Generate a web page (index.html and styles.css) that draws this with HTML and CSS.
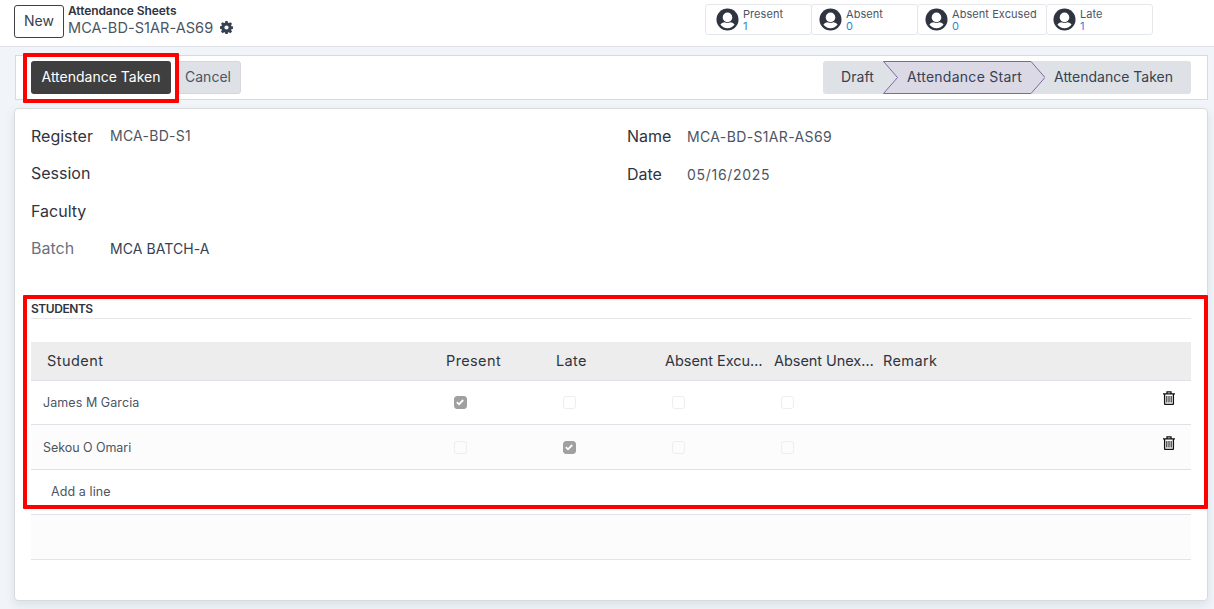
FILE: index.html
```html
<!DOCTYPE html>
<html lang="en">
<head>
<meta charset="utf-8">
<title>Attendance Sheets</title>
<link rel="stylesheet" href="styles.css">
</head>
<body>
<svg class="defs" width="0" height="0" aria-hidden="true">
  <defs>
    <symbol id="person" viewBox="0 0 24 24">
      <circle cx="12" cy="12" r="11.500" fill="#2f3440"/>
      <circle cx="12" cy="9.800" r="5" fill="#fff"/>
      <path d="M4.600 17.200C6 15.500 7.800 15 9 14.900c.9.500 1.900.8 3 .8s2.100-.3 3-.8c1.200.1 3 .6 4.400 2.300A9 9 0 0 1 12 21a9 9 0 0 1-7.400-3.800z" fill="#fff"/>
    </symbol>
    <symbol id="trash" viewBox="0 0 12 14">
      <path d="M4 2.200V.8h4v1.400M0 2.800h12M1.600 3v9.600q0 .9.900.9h7q.9 0 .9-.9V3" fill="none" stroke="#111" stroke-width="1.300"/>
      <path d="M3.800 5v6.500M6 5v6.500M8.200 5v6.500" fill="none" stroke="#333" stroke-width="1.200"/>
    </symbol>
    <symbol id="tick" viewBox="0 0 12 12">
      <path d="M2.800 6.200l2.200 2.100 4.200-4.300" fill="none" stroke="#fff" stroke-width="1.800"/>
    </symbol>
  </defs>
</svg>
<header class="topbar">
  <button class="btn-new">New</button>
  <div class="crumbs">
    <div class="crumb-parent">Attendance Sheets</div>
    <div class="crumb-current">MCA-BD-S1AR-AS69
      <svg class="gear" viewBox="0 0 16 16" width="13" height="13"><path fill="#374151" fill-rule="evenodd" d="M6.600 0h2.800l.4 2.100 1.200.5L12.800 1.400l2 2-1.200 1.800.5 1.200 1.900.4v2.800l-1.900.4-.5 1.200 1.200 1.800-2 2-1.800-1.200-1.200.5-.4 1.900H6.600l-.4-1.900-1.200-.5-1.800 1.200-2-2 1.200-1.800-.5-1.200L0 9.400V6.600l1.900-.4.5-1.200L1.200 3.400l2-2L5 2.600l1.200-.5zM8 5.400a2.600 2.600 0 1 0 0 5.200 2.600 2.600 0 0 0 0-5.200z"/></svg>
    </div>
  </div>
  <div class="stats">
    <div class="stat stat-a"><svg class="person" width="23" height="23"><use href="#person"/></svg><div class="stat-text"><span class="stat-label">Present</span><span class="stat-val">1</span></div></div>
    <div class="stat stat-b"><svg class="person" width="23" height="23"><use href="#person"/></svg><div class="stat-text"><span class="stat-label">Absent</span><span class="stat-val">0</span></div></div>
    <div class="stat stat-c"><svg class="person" width="23" height="23"><use href="#person"/></svg><div class="stat-text"><span class="stat-label">Absent Excused</span><span class="stat-val">0</span></div></div>
    <div class="stat stat-d"><svg class="person" width="23" height="23"><use href="#person"/></svg><div class="stat-text"><span class="stat-label">Late</span><span class="stat-val">1</span></div></div>
  </div>
</header>

<section class="actionbar">
  <div class="actions">
    <button class="btn-dark">Attendance Taken</button>
    <button class="btn-light">Cancel</button>
  </div>
  <div class="statusbar">
    <span class="step step-draft">Draft</span>
    <span class="step step-current">Attendance Start
      <svg class="arrow" viewBox="0 0 162 33" width="162" height="33"><path d="M0.500 0.500H148L162 16.500L148 32.500H0.500L14.500 16.500Z" fill="#dcd9e6" stroke="#7a6a9e"/></svg>
    </span>
    <span class="step step-last">Attendance Taken</span>
  </div>
</section>

<main class="sheet">
  <div class="fields">
    <div class="field-col">
      <div class="field"><span class="label">Register</span><span class="value">MCA-BD-S1</span></div>
      <div class="field"><span class="label">Session</span></div>
      <div class="field"><span class="label">Faculty</span></div>
      <div class="field"><span class="label label-muted">Batch</span><span class="value value-dark">MCA BATCH-A</span></div>
    </div>
    <div class="field-col col-right">
      <div class="field"><span class="label label-short">Name</span><span class="value value-name">MCA-BD-S1AR-AS69</span></div>
      <div class="field"><span class="label label-short">Date</span><span class="value value-date">05/16/2025</span></div>
    </div>
  </div>

  <h2 class="section-title">STUDENTS</h2>

  <table class="grid">
    <thead>
      <tr>
        <th class="c-student">Student</th>
        <th class="c-check">Present</th>
        <th class="c-check c-shift">Late</th>
        <th class="c-check c-shift c-abs">Absent Excu…</th>
        <th class="c-check c-shift c-abs">Absent Unex…</th>
        <th class="c-remark c-shift">Remark</th>
        <th class="c-del"></th>
      </tr>
    </thead>
    <tbody>
      <tr class="row-first">
        <td class="name">James M Garcia</td>
        <td><span class="box on"><svg width="12" height="12"><use href="#tick"/></svg></span></td>
        <td><span class="box"></span></td>
        <td><span class="box"></span></td>
        <td><span class="box"></span></td>
        <td></td>
        <td class="del"><svg width="12" height="14"><use href="#trash"/></svg></td>
      </tr>
      <tr class="alt">
        <td class="name">Sekou O Omari</td>
        <td><span class="box"></span></td>
        <td><span class="box on"><svg width="12" height="12"><use href="#tick"/></svg></span></td>
        <td><span class="box"></span></td>
        <td><span class="box"></span></td>
        <td></td>
        <td class="del"><svg width="12" height="14"><use href="#trash"/></svg></td>
      </tr>
      <tr class="add-row"><td colspan="7"><span class="add-line">Add a line</span></td></tr>
    </tbody>
  </table>
  <div class="footer-band"></div>
</main>

<div class="mark mark-btn"></div>
<div class="mark mark-table"></div>
</body>
</html>
```

FILE: styles.css
```css
* { box-sizing: border-box; }
html, body { margin: 0; padding: 0; }
body {
  width: 1214px; height: 609px; overflow: hidden; position: relative;
  background: #f1f5fa; color: #374151;
  font-family: "Inter", "Noto Sans", "Liberation Sans", sans-serif;
  font-size: 14px;
}
button { font-family: inherit; cursor: pointer; }
.defs { position: absolute; }

.topbar {
  height: 47px; background: #fff; border-bottom: 1px solid #dee2e6;
  display: flex; align-items: flex-start; padding: 5px 0 0 14px;
}
.btn-new {
  width: 50px; height: 33px; padding: 0 0 2px; background: #fff; color: #374151;
  border: 1px solid #3f4147; border-radius: 3px; font-size: 14px;
}
.crumbs { margin-left: 4px; margin-top: -1px; width: 170px; }
.crumb-parent { font-size: 12px; font-weight: 600; line-height: 13px; color: #2f3440; letter-spacing: -0.08px; white-space: nowrap; }
.crumb-current { font-size: 14.500px; line-height: 21px; color: #4b5563; display: flex; align-items: center; gap: 7px; letter-spacing: .06px; white-space: nowrap; }
.gear { flex: none; }

.stats { display: flex; margin-left: 467px; margin-top: -1px; }
.stat {
  height: 31px; background: #fff; border: 1px solid #e5e7eb; border-radius: 3px;
  display: flex; align-items: center; padding-left: 10px; gap: 4px; margin-right: -1px; flex: none;
}
.stat-a, .stat-b, .stat-d { width: 107px; }
.stat-b { padding-left: 7px; }
.stat-c { width: 130px; padding-left: 7px; }
.stat-d { padding-left: 6px; }
.stat-text { display: flex; flex-direction: column; font-size: 11px; line-height: 12px; letter-spacing: .06px; }
.stat-label { color: #4b5563; }
.stat-val { color: #2f86d6; }

.actionbar {
  height: 45px; margin: 8px 6px 0 15px; background: #fff; border: 1px solid #d8dadd;
  display: flex; align-items: center; justify-content: space-between;
  padding: 0 16px 0 15px;
}
.actions { display: flex; gap: 6px; }
.btn-dark, .btn-light { height: 33px; border-radius: 3px; font-size: 14px; padding: 0 0 2px; border: 0; }
.btn-dark { width: 140px; background: #3f3f3f; color: #fff; }
.btn-light { width: 64px; background: #dee2e6; border: 1px solid #d4d8dc; color: #4b5563; padding-right: 2px; }

.statusbar {
  display: flex; height: 33px; width: 368px; background: #dee2e6; border-radius: 3px;
  font-size: 14px; color: #374151; line-height: 31px; letter-spacing: .05px;
}
.step { white-space: nowrap; }
.step-draft { width: 60px; padding-left: 18px; }
.step-current { width: 162px; padding-left: 24px; position: relative; height: 33px; isolation: isolate; letter-spacing: .27px; }
.step-current .arrow { position: absolute; left: 0; top: 0; z-index: -1; }
.step-last { padding-left: 9px; letter-spacing: 0; }

.sheet {
  height: 493px; margin: 8px 6px 0 14px; background: #fff; border: 1px solid #d8dadd;
  border-radius: 4px; box-shadow: 0 4px 10px rgba(60, 70, 90, .12);
  padding: 8px 16px 0 16px;
}
.fields { display: grid; grid-template-columns: 596px 1fr; height: 160px; }
.field { display: flex; align-items: center; height: 37.500px; }
.col-right .field { height: 38px; }
.label { width: 79px; font-size: 16px; color: #2f3440; }
.label-short { width: 60px; }
.label-muted { color: #6b7280; }
.value { font-size: 14px; color: #4b5563; letter-spacing: .25px; }
.value-dark { color: #374151; letter-spacing: .08px; }
.value-name { letter-spacing: .36px; }
.value-date { letter-spacing: .7px; }

.section-title {
  margin: 23px 0 0; height: 19px; font-size: 12px; line-height: 17px; font-weight: 600;
  color: #2f3440; border-bottom: 1px solid #e5e7eb; letter-spacing: -0.45px;
}
.grid { width: 100%; margin-top: 23px; border-collapse: collapse; table-layout: fixed; }
.grid th {
  height: 38px; background: #ededed; border-bottom: 1px solid #dee2e6; font-size: 14.500px;
  font-weight: 400; color: #2f3440; text-align: left; white-space: nowrap; padding: 0; letter-spacing: .38px;
}
.c-student { width: 415px; padding-left: 16px !important; letter-spacing: .45px !important; }
.c-check { width: 109px; }
.grid .c-shift { padding-left: 1px; }
.grid .c-abs { letter-spacing: -0.05px; }
.c-del { width: 44px; }
.grid td { padding: 0 0 0 8px; border-bottom: 1px solid #dee2e6; vertical-align: middle; }
.row-first td { height: 44px; }
.grid .alt td { height: 45px; background: #fcfcfc; padding-top: 1px; }
.grid td.name { padding-left: 12px; font-size: 12.500px; color: #4b5563; letter-spacing: .07px; }
.grid .alt td.name { letter-spacing: -0.05px; }
.box {
  display: block; width: 13px; height: 13px; border: 1px solid #eceef0; border-radius: 3px; background: #fff;
}
.alt .box { background: #fcfcfc; }
.box.on { background: #a0a0a0; border-color: #a0a0a0; }
.box.on svg { display: block; margin: -1px; }
.grid td.del { padding: 0 0 8px 0; }
.del svg { display: block; margin-left: 16px; }
.grid .add-row td { height: 45px; border-bottom: 0; padding: 0 0 2px 20px; }
.add-line { font-size: 12.500px; color: #4b5563; letter-spacing: .1px; }
.footer-band { height: 46px; background: #fcfcfc; border-top: 1px solid #e3e4ea; border-bottom: 1px solid #e3e4ea; }

.mark { position: absolute; border: 4px solid #fe0000; border-radius: 1px; pointer-events: none; }
.mark-btn { left: 23px; top: 53px; width: 156px; height: 50px; }
.mark-table { left: 23px; top: 295px; width: 1185px; height: 214px; }
```
